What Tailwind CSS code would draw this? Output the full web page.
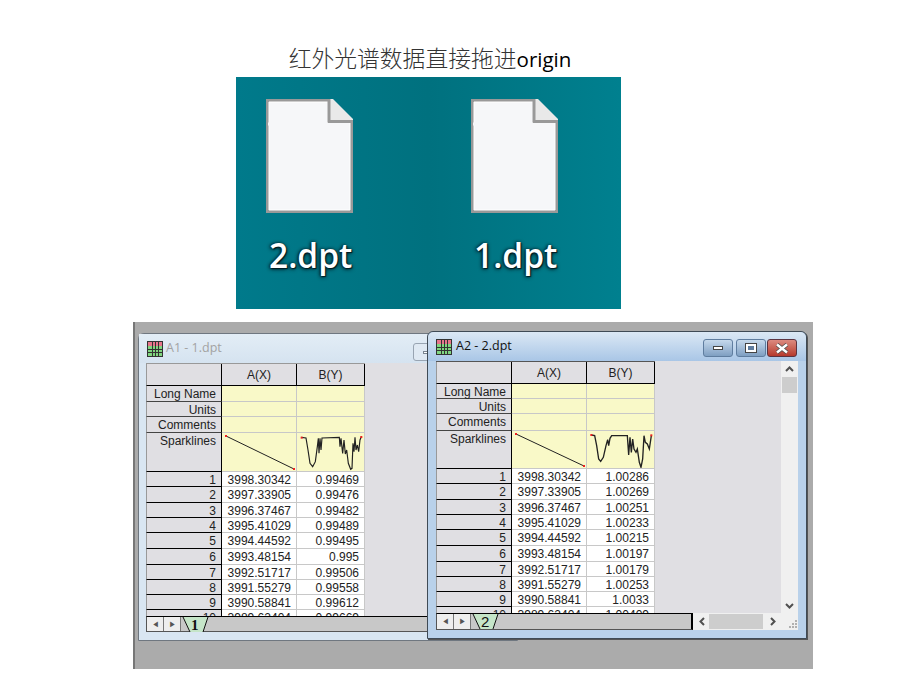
<!doctype html>
<html lang="zh">
<head>
<meta charset="utf-8">
<script src="https://cdn.jsdelivr.net/npm/@tailwindcss/browser@4"></script>
</head>
<body class="bg-white w-[920px] h-[690px] overflow-hidden font-['Liberation_Sans',sans-serif]">
<div class="w-[860px] h-[77px] flex justify-center items-end pb-[2px] text-[22.8px] leading-[32px] text-[#333] font-['Noto_Sans_CJK_SC',sans-serif] font-light"><span>红外光谱数据直接拖进<span class="font-['Open_Sans',sans-serif] font-normal text-[20.5px] text-black">origin</span></span></div>

<!-- desktop picture -->
<div class="ml-[236px] w-[385px] h-[232px] bg-linear-to-r from-[#007a8b] via-[#00717f] to-[#00808f] pt-[22px] pl-[30px] flex gap-[118px]">
  <div class="w-[87px]">
    <svg class="block" width="87" height="114" viewBox="0 0 87 114"><path d="M1.500 1.500H64V21.500H85.500V112.500H1.500Z" fill="#f6f7f9" stroke="#999" stroke-width="3"/><path d="M3 3H62V23H84V111H3Z" fill="none" stroke="#fff" stroke-width="1"/><path d="M64 0H67L87 20V23H64Z" fill="#e9e9e9"/><path d="M63 0V22.500H87" fill="none" stroke="#999" stroke-width="3"/><path d="M2 25H62" stroke="#f6f7f9" stroke-width="3"/></svg>
    <div class="mt-[19px] pl-[3px] text-[33.5px] leading-[46px] font-semibold text-white font-['Open_Sans',sans-serif] [text-shadow:1px_1px_1px_#001a20,0_1px_4px_#001a20,-1px_0_3px_#00303a]">2.dpt</div>
  </div>
  <div class="w-[87px]">
    <svg class="block" width="87" height="114" viewBox="0 0 87 114"><path d="M1.500 1.500H64V21.500H85.500V112.500H1.500Z" fill="#f6f7f9" stroke="#999" stroke-width="3"/><path d="M3 3H62V23H84V111H3Z" fill="none" stroke="#fff" stroke-width="1"/><path d="M64 0H67L87 20V23H64Z" fill="#e9e9e9"/><path d="M63 0V22.500H87" fill="none" stroke="#999" stroke-width="3"/><path d="M2 25H62" stroke="#f6f7f9" stroke-width="3"/></svg>
    <div class="mt-[19px] pl-[3px] text-[33.5px] leading-[46px] font-semibold text-white font-['Open_Sans',sans-serif] [text-shadow:1px_1px_1px_#001a20,0_1px_4px_#001a20,-1px_0_3px_#00303a]">1.dpt</div>
  </div>
</div>

<!-- origin workspace -->
<div class="relative ml-[133px] mt-[13px] w-[680px] h-[347px] bg-[#ababab] border-l-2 border-l-[#777] overflow-hidden">

  <!-- window A1 (inactive) -->
  <div class="absolute left-[3px] top-[11px] w-[380px] h-[308px] rounded-t-md border border-[#6f7780] bg-[#d9e6f2] flex flex-col">
    <div class="relative h-[29px] shrink-0 flex items-center gap-[3px] pl-[8px] bg-linear-to-b from-[#e3edf6] to-[#d5e3f0]">
      <svg width="16" height="16" viewBox="0 0 16 16" shape-rendering="crispEdges"><rect width="16" height="16" fill="#333"/><rect x="1" y="1" width="14" height="4" fill="#e8748c"/><rect x="1" y="5" width="14" height="10" fill="#7fd67f"/><path d="M1 8H15M1 11H15M5 1V15M8 1V15M11 1V15" stroke="#333" stroke-width="1" fill="none"/></svg>
      <span class="text-[12.500px] text-[#a3a3a3] font-['Open_Sans',sans-serif]">A1 - 1.dpt</span>
      <div class="absolute left-[274px] top-[9px] w-[30px] h-[18px] rounded-[3px] border border-[#98a4b2] bg-[#dfe9f3] flex items-center justify-center"><div class="w-[10px] h-[3px] bg-white border border-[#7a8591]"></div></div>
    </div>
    <div class="ml-[7px] mr-[8px] flex-1 flex flex-col min-h-0">
      <div class="h-[253px] bg-[#e0dfe3] overflow-hidden shrink-0 text-[12px] leading-[17px] text-[#222]">
        <div class="grid grid-cols-[76px_75px_68px] grid-rows-[100%] w-[219px] h-[23px] text-center leading-[23px] border-t border-t-[#999]"><div class="border-l border-l-[#999] border-r border-b border-black"></div><div class="border-r border-b border-black">A(X)</div><div class="border-r border-b border-black">B(Y)</div></div>
        <div class="grid grid-cols-[76px_75px_68px] grid-rows-[100%] w-[219px] h-[16px]"><div class="border-l border-l-[#999] border-b border-b-[#444] text-right pr-[5px] border-r-black border-r">Long Name</div><div class="bg-[#f9f9c8] border-r border-b border-[#c8c8c8]"></div><div class="bg-[#f9f9c8] border-r border-b border-[#c8c8c8]"></div></div>
        <div class="grid grid-cols-[76px_75px_68px] grid-rows-[100%] w-[219px] h-[15px]"><div class="border-l border-l-[#999] border-b border-b-[#444] text-right pr-[5px] border-r-black border-r">Units</div><div class="bg-[#f9f9c8] border-r border-b border-[#c8c8c8]"></div><div class="bg-[#f9f9c8] border-r border-b border-[#c8c8c8]"></div></div>
        <div class="grid grid-cols-[76px_75px_68px] grid-rows-[100%] w-[219px] h-[16px]"><div class="border-l border-l-[#999] border-b border-b-[#444] text-right pr-[5px] border-r-black border-r">Comments</div><div class="bg-[#f9f9c8] border-r border-b border-[#c8c8c8]"></div><div class="bg-[#f9f9c8] border-r border-b border-[#c8c8c8]"></div></div>
        <div class="grid grid-cols-[76px_75px_68px] grid-rows-[100%] w-[219px] h-[39px]">
          <div class="border-l border-l-[#999] border-b border-black text-right pr-[5px] border-r-black border-r">Sparklines</div>
          <div class="bg-[#f9f9c8] border-r border-b border-[#c8c8c8]"><svg class="block" width="74" height="38" viewBox="0 0 74 38"><path d="M4 3L72 36" stroke="#222" stroke-width="1" fill="none"/><rect x="3" y="2" width="2" height="2" fill="#e22"/><rect x="71" y="35" width="2" height="2" fill="#e22"/></svg></div>
          <div class="bg-[#f9f9c8] border-r border-b border-[#c8c8c8]"><svg class="block" width="67" height="38" viewBox="231 9 201 114"><polyline points="244,22 258,24 264,60 270,100 278,110 286,95 292,50 295,25 297,70 300,25 303,60 306,24 358,22 360,50 363,25 368,70 372,30 376,72 380,60 385,100 392,118 396,115 399,40 402,65 405,22 408,60 412,45 416,65 420,30 424,20" fill="none" stroke="#222" stroke-width="3.500"/><rect x="242" y="20" width="6" height="6" fill="#e22"/><rect x="421" y="18" width="6" height="6" fill="#e22"/></svg></div>
        </div>
        <div class="h-[15px] w-[219px] grid grid-cols-[76px_75px_68px] grid-rows-[100%] text-right"><div class="border-l border-l-[#999] border-b border-black border-r pr-[5px]">1</div><div class="bg-white border-r border-b border-[#c8c8c8] pr-[5px]">3998.30342</div><div class="bg-white border-r border-b border-[#c8c8c8] pr-[5px]">0.99469</div></div>
        <div class="h-[16px] w-[219px] grid grid-cols-[76px_75px_68px] grid-rows-[100%] text-right"><div class="border-l border-l-[#999] border-b border-black border-r pr-[5px]">2</div><div class="bg-white border-r border-b border-[#c8c8c8] pr-[5px]">3997.33905</div><div class="bg-white border-r border-b border-[#c8c8c8] pr-[5px]">0.99476</div></div>
        <div class="h-[15px] w-[219px] grid grid-cols-[76px_75px_68px] grid-rows-[100%] text-right"><div class="border-l border-l-[#999] border-b border-black border-r pr-[5px]">3</div><div class="bg-white border-r border-b border-[#c8c8c8] pr-[5px]">3996.37467</div><div class="bg-white border-r border-b border-[#c8c8c8] pr-[5px]">0.99482</div></div>
        <div class="h-[15px] w-[219px] grid grid-cols-[76px_75px_68px] grid-rows-[100%] text-right"><div class="border-l border-l-[#999] border-b border-black border-r pr-[5px]">4</div><div class="bg-white border-r border-b border-[#c8c8c8] pr-[5px]">3995.41029</div><div class="bg-white border-r border-b border-[#c8c8c8] pr-[5px]">0.99489</div></div>
        <div class="h-[16px] w-[219px] grid grid-cols-[76px_75px_68px] grid-rows-[100%] text-right"><div class="border-l border-l-[#999] border-b border-black border-r pr-[5px]">5</div><div class="bg-white border-r border-b border-[#c8c8c8] pr-[5px]">3994.44592</div><div class="bg-white border-r border-b border-[#c8c8c8] pr-[5px]">0.99495</div></div>
        <div class="h-[16px] w-[219px] grid grid-cols-[76px_75px_68px] grid-rows-[100%] text-right"><div class="border-l border-l-[#999] border-b border-black border-r pr-[5px]">6</div><div class="bg-white border-r border-b border-[#c8c8c8] pr-[5px]">3993.48154</div><div class="bg-white border-r border-b border-[#c8c8c8] pr-[5px]">0.995</div></div>
        <div class="h-[15px] w-[219px] grid grid-cols-[76px_75px_68px] grid-rows-[100%] text-right"><div class="border-l border-l-[#999] border-b border-black border-r pr-[5px]">7</div><div class="bg-white border-r border-b border-[#c8c8c8] pr-[5px]">3992.51717</div><div class="bg-white border-r border-b border-[#c8c8c8] pr-[5px]">0.99506</div></div>
        <div class="h-[15px] w-[219px] grid grid-cols-[76px_75px_68px] grid-rows-[100%] text-right"><div class="border-l border-l-[#999] border-b border-black border-r pr-[5px]">8</div><div class="bg-white border-r border-b border-[#c8c8c8] pr-[5px]">3991.55279</div><div class="bg-white border-r border-b border-[#c8c8c8] pr-[5px]">0.99558</div></div>
        <div class="h-[15px] w-[219px] grid grid-cols-[76px_75px_68px] grid-rows-[100%] text-right"><div class="border-l border-l-[#999] border-b border-black border-r pr-[5px]">9</div><div class="bg-white border-r border-b border-[#c8c8c8] pr-[5px]">3990.58841</div><div class="bg-white border-r border-b border-[#c8c8c8] pr-[5px]">0.99612</div></div>
        <div class="h-[16px] w-[219px] grid grid-cols-[76px_75px_68px] grid-rows-[100%] text-right"><div class="border-l border-l-[#999] border-b border-black border-r pr-[5px]">10</div><div class="bg-white border-r border-b border-[#c8c8c8] pr-[5px]">3989.62404</div><div class="bg-white border-r border-b border-[#c8c8c8] pr-[5px]">0.99669</div></div>
      </div>
      <div class="h-[16px] flex shrink-0 bg-[#c8c8c8] border-t border-black border-l border-l-[#555] border-b border-b-[#555]">
        <div class="w-[17px] bg-[#eee] border-r border-[#777] text-center text-[7px] leading-[15px] text-[#555]">◀</div>
        <div class="w-[17px] bg-[#eee] border-r border-[#777] text-center text-[7px] leading-[15px] text-[#555]">▶</div>
        <svg class="ml-[1px] block shrink-0" width="30" height="15" viewBox="0 0 30 15"><path d="M1 0L8 15H21L26 0Z" fill="#c5e5c8"/><path d="M1 0L8 15M26 0L21 15" stroke="#111" fill="none"/><text x="9" y="13" font-size="15" font-family="Liberation Serif" font-weight="bold" fill="#111">1</text></svg>
      </div>
    </div>
  </div>

  <!-- window A2 (active) -->
  <div class="absolute left-[292px] top-[9px] w-[380px] h-[308px] rounded-t-md border border-[#3f4a55] bg-[#b9d1ea] flex flex-col shadow-[1px_1px_0_#555]">
    <div class="relative h-[29px] shrink-0 flex items-center gap-[4px] pl-[8px] rounded-t-md bg-linear-to-b from-[#dbe8f5] to-[#a9c6e6]">
      <svg width="16" height="16" viewBox="0 0 16 16" shape-rendering="crispEdges"><rect width="16" height="16" fill="#333"/><rect x="1" y="1" width="14" height="4" fill="#e8748c"/><rect x="1" y="5" width="14" height="10" fill="#7fd67f"/><path d="M1 8H15M1 11H15M5 1V15M8 1V15M11 1V15" stroke="#333" stroke-width="1" fill="none"/></svg>
      <span class="text-[12.500px] text-[#111] font-['Open_Sans',sans-serif]">A2 - 2.dpt</span>
      <div class="absolute right-[73px] top-[7px] w-[30px] h-[18px] rounded-[3px] border border-[#5f7d9f] bg-linear-to-b from-[#c6d9ec] to-[#7f9fc2] flex items-center justify-center"><div class="w-[10px] h-[4px] bg-white border border-[#444]"></div></div>
      <div class="absolute right-[40px] top-[7px] w-[30px] h-[18px] rounded-[3px] border border-[#5f7d9f] bg-linear-to-b from-[#c6d9ec] to-[#7f9fc2] flex items-center justify-center"><div class="w-[10px] h-[8px] bg-[#5f7d9f] border-2 border-white outline outline-[#444]"></div></div>
      <div class="absolute right-[9px] top-[7px] w-[30px] h-[18px] rounded-[3px] border border-[#5b3340] bg-linear-to-b from-[#dc8a80] to-[#b5382c] flex items-center justify-center text-white"><svg width="14" height="11" viewBox="0 0 14 11"><path d="M2 1.500L12 9.500M12 1.500L2 9.500" stroke="#4a4a4a" stroke-width="4"/><path d="M2 1.500L12 9.500M12 1.500L2 9.500" stroke="#fff" stroke-width="2.500"/></svg></div>
    </div>
    <div class="ml-[8px] mr-[8px] flex-1 flex flex-col min-h-0">
      <div class="h-[252px] flex shrink-0">
        <div class="flex-1 bg-[#e0dfe3] overflow-hidden text-[12px] leading-[17px] text-[#222]">
          <div class="grid grid-cols-[76px_75px_68px] grid-rows-[100%] w-[219px] h-[23px] text-center leading-[23px] border-t border-t-[#555]"><div class="border-l border-l-[#999] border-r border-b border-black"></div><div class="border-r border-b border-black">A(X)</div><div class="border-r border-b border-black">B(Y)</div></div>
          <div class="grid grid-cols-[76px_75px_68px] grid-rows-[100%] w-[219px] h-[15px]"><div class="border-l border-l-[#999] border-b border-b-[#444] text-right pr-[5px] border-r-black border-r">Long Name</div><div class="bg-[#f9f9c8] border-r border-b border-[#c8c8c8]"></div><div class="bg-[#f9f9c8] border-r border-b border-[#c8c8c8]"></div></div>
          <div class="grid grid-cols-[76px_75px_68px] grid-rows-[100%] w-[219px] h-[15px]"><div class="border-l border-l-[#999] border-b border-b-[#444] text-right pr-[5px] border-r-black border-r">Units</div><div class="bg-[#f9f9c8] border-r border-b border-[#c8c8c8]"></div><div class="bg-[#f9f9c8] border-r border-b border-[#c8c8c8]"></div></div>
          <div class="grid grid-cols-[76px_75px_68px] grid-rows-[100%] w-[219px] h-[17px]"><div class="border-l border-l-[#999] border-b border-b-[#444] text-right pr-[5px] border-r-black border-r">Comments</div><div class="bg-[#f9f9c8] border-r border-b border-[#c8c8c8]"></div><div class="bg-[#f9f9c8] border-r border-b border-[#c8c8c8]"></div></div>
          <div class="grid grid-cols-[76px_75px_68px] grid-rows-[100%] w-[219px] h-[38px]">
            <div class="border-l border-l-[#999] border-b border-black text-right pr-[5px] border-r-black border-r">Sparklines</div>
            <div class="bg-[#f9f9c8] border-r border-b border-[#c8c8c8]"><svg class="block" width="74" height="37" viewBox="0 0 74 37"><path d="M4 3L72 35" stroke="#222" stroke-width="1" fill="none"/><rect x="3" y="2" width="2" height="2" fill="#e22"/><rect x="71" y="34" width="2" height="2" fill="#e22"/></svg></div>
            <div class="bg-[#f9f9c8] border-r border-b border-[#c8c8c8]"><svg class="block" width="67" height="37" viewBox="231 6 201 111"><polyline points="244,18 254,20 260,50 266,90 272,97 280,85 288,50 293,32 296,50 300,28 305,20 352,20 356,78 360,25 364,70 368,30 372,60 378,70 382,60 388,100 393,115 398,90 402,20 406,40 412,45 418,60 424,20" fill="none" stroke="#222" stroke-width="4"/><rect x="241" y="15" width="6" height="6" fill="#e22"/><rect x="421" y="16" width="6" height="6" fill="#e22"/></svg></div>
          </div>
          <div class="h-[15px] w-[219px] grid grid-cols-[76px_75px_68px] grid-rows-[100%] text-right"><div class="border-l border-l-[#999] border-b border-black border-r pr-[5px]">1</div><div class="bg-white border-r border-b border-[#c8c8c8] pr-[5px]">3998.30342</div><div class="bg-white border-r border-b border-[#c8c8c8] pr-[5px]">1.00286</div></div>
          <div class="h-[16px] w-[219px] grid grid-cols-[76px_75px_68px] grid-rows-[100%] text-right"><div class="border-l border-l-[#999] border-b border-black border-r pr-[5px]">2</div><div class="bg-white border-r border-b border-[#c8c8c8] pr-[5px]">3997.33905</div><div class="bg-white border-r border-b border-[#c8c8c8] pr-[5px]">1.00269</div></div>
          <div class="h-[15px] w-[219px] grid grid-cols-[76px_75px_68px] grid-rows-[100%] text-right"><div class="border-l border-l-[#999] border-b border-black border-r pr-[5px]">3</div><div class="bg-white border-r border-b border-[#c8c8c8] pr-[5px]">3996.37467</div><div class="bg-white border-r border-b border-[#c8c8c8] pr-[5px]">1.00251</div></div>
          <div class="h-[15px] w-[219px] grid grid-cols-[76px_75px_68px] grid-rows-[100%] text-right"><div class="border-l border-l-[#999] border-b border-black border-r pr-[5px]">4</div><div class="bg-white border-r border-b border-[#c8c8c8] pr-[5px]">3995.41029</div><div class="bg-white border-r border-b border-[#c8c8c8] pr-[5px]">1.00233</div></div>
          <div class="h-[16px] w-[219px] grid grid-cols-[76px_75px_68px] grid-rows-[100%] text-right"><div class="border-l border-l-[#999] border-b border-black border-r pr-[5px]">5</div><div class="bg-white border-r border-b border-[#c8c8c8] pr-[5px]">3994.44592</div><div class="bg-white border-r border-b border-[#c8c8c8] pr-[5px]">1.00215</div></div>
          <div class="h-[16px] w-[219px] grid grid-cols-[76px_75px_68px] grid-rows-[100%] text-right"><div class="border-l border-l-[#999] border-b border-black border-r pr-[5px]">6</div><div class="bg-white border-r border-b border-[#c8c8c8] pr-[5px]">3993.48154</div><div class="bg-white border-r border-b border-[#c8c8c8] pr-[5px]">1.00197</div></div>
          <div class="h-[15px] w-[219px] grid grid-cols-[76px_75px_68px] grid-rows-[100%] text-right"><div class="border-l border-l-[#999] border-b border-black border-r pr-[5px]">7</div><div class="bg-white border-r border-b border-[#c8c8c8] pr-[5px]">3992.51717</div><div class="bg-white border-r border-b border-[#c8c8c8] pr-[5px]">1.00179</div></div>
          <div class="h-[15px] w-[219px] grid grid-cols-[76px_75px_68px] grid-rows-[100%] text-right"><div class="border-l border-l-[#999] border-b border-black border-r pr-[5px]">8</div><div class="bg-white border-r border-b border-[#c8c8c8] pr-[5px]">3991.55279</div><div class="bg-white border-r border-b border-[#c8c8c8] pr-[5px]">1.00253</div></div>
          <div class="h-[15px] w-[219px] grid grid-cols-[76px_75px_68px] grid-rows-[100%] text-right"><div class="border-l border-l-[#999] border-b border-black border-r pr-[5px]">9</div><div class="bg-white border-r border-b border-[#c8c8c8] pr-[5px]">3990.58841</div><div class="bg-white border-r border-b border-[#c8c8c8] pr-[5px]">1.0033</div></div>
          <div class="h-[16px] w-[219px] grid grid-cols-[76px_75px_68px] grid-rows-[100%] text-right"><div class="border-l border-l-[#999] border-b border-black border-r pr-[5px]">10</div><div class="bg-white border-r border-b border-[#c8c8c8] pr-[5px]">3989.62404</div><div class="bg-white border-r border-b border-[#c8c8c8] pr-[5px]">1.00409</div></div>
        </div>
        <div class="w-[17px] bg-[#f0f0f0] flex flex-col items-center shrink-0">
          <svg class="mt-[5px]" width="9" height="7" viewBox="0 0 9 7"><path d="M1 5L4.500 1.500L8 5" fill="none" stroke="#505050" stroke-width="2"/></svg>
          <div class="mt-[4px] w-[15px] h-[16px] bg-[#cdcdcd]"></div>
          <svg class="mt-auto mb-[4px]" width="9" height="7" viewBox="0 0 9 7"><path d="M1 2L4.500 5.500L8 2" fill="none" stroke="#505050" stroke-width="2"/></svg>
        </div>
      </div>
      <div class="h-[17px] flex shrink-0 text-[#555]">
        <div class="w-[258px] flex bg-[#c8c8c8] border-t border-black border-l border-l-[#555] border-b border-b-[#555] border-r-2 border-r-black">
          <div class="w-[17px] bg-[#eee] border-r border-[#777] text-center text-[7px] leading-[15px]">◀</div>
          <div class="w-[17px] bg-[#eee] border-r border-[#777] text-center text-[7px] leading-[15px]">▶</div>
          <svg class="ml-[1px] block shrink-0" width="30" height="15" viewBox="0 0 30 15"><path d="M1 0L8 15H21L26 0Z" fill="#c5e5c8"/><path d="M1 0L8 15M26 0L21 15" stroke="#111" fill="none"/><text x="9" y="13" font-size="15" font-family="Liberation Sans" fill="#111">2</text></svg>
        </div>
        <div class="flex-1 bg-[#f0f0f0] flex items-center">
          <svg class="ml-[6px]" width="7" height="9" viewBox="0 0 7 9"><path d="M5 1L1.500 4.500L5 8" fill="none" stroke="#505050" stroke-width="2"/></svg>
          <div class="ml-[3px] w-[54px] h-[15px] bg-[#cdcdcd]"></div>
          <svg class="ml-[6px]" width="7" height="9" viewBox="0 0 7 9"><path d="M2 1L5.500 4.500L2 8" fill="none" stroke="#505050" stroke-width="2"/></svg>
          <svg class="ml-[12px] mt-[4px]" width="10" height="10" viewBox="0 0 10 10" shape-rendering="crispEdges"><path d="M7 1h2v2h-2zM4 4h2v2h-2zM7 4h2v2h-2zM1 7h2v2h-2zM4 7h2v2h-2zM7 7h2v2h-2z" fill="#b0b0b0"/></svg>
        </div>
      </div>
    </div>
  </div>
</div>
</body>
</html>
